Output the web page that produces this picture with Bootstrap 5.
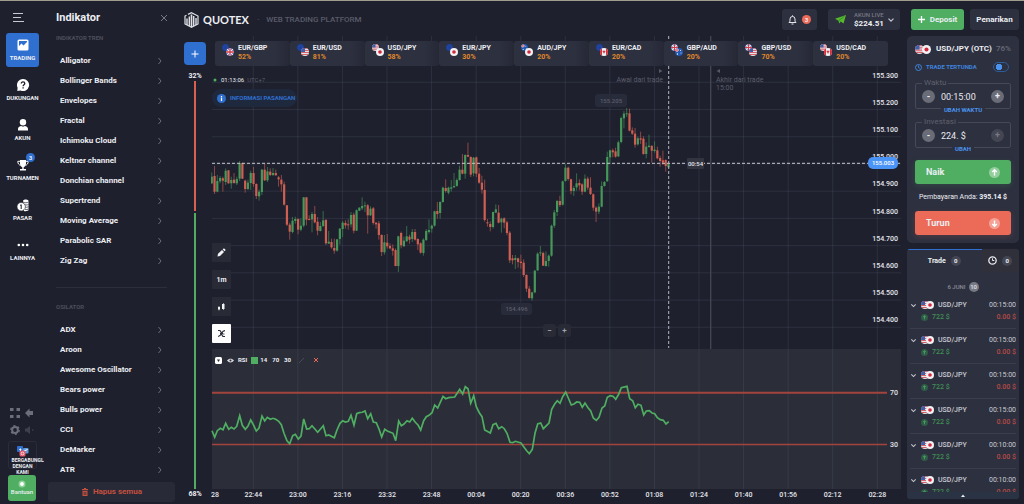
<!DOCTYPE html>
<html lang="id">
<head>
<meta charset="utf-8">
<meta name="viewport" content="width=device-width, initial-scale=1">
<title>Quotex – Web Trading Platform</title>
<link rel="stylesheet" href="https://cdn.jsdelivr.net/npm/bootstrap@5.3.0/dist/css/bootstrap.min.css">
<style>
:root{--bg:#1e202d;--panel:#2d303f;--blue:#2f6fd0;--sky:#4a94f0;--green:#4fae62;--red:#ec6b58}
body{background:var(--bg);color:#eceef3;font-family:Roboto,"Liberation Sans",sans-serif;font-size:7px;line-height:10px;overflow:hidden}
svg{display:block;flex:none}
a{text-decoration:none;color:inherit}
.app{height:100vh;border-top:1px solid #a09c8e}
.btn{--bs-btn-font-size:8px;--bs-btn-line-height:10px;--bs-btn-padding-x:0;--bs-btn-padding-y:0;--bs-btn-border-width:0px;--bs-btn-color:#eceef3;--bs-btn-border-radius:3px;--bs-btn-hover-color:#fff;font-weight:700;transition:none}
/* side navigation */
.side{width:44px;padding:9px 0 3px 6px;overflow:hidden}
.side-link{width:33px;height:34px;border-radius:3px;font-size:6px;line-height:8px;font-weight:700;position:relative;padding-top:5px}
.side-link.active{background:var(--blue)}
.side-link svg{width:14px;height:14px;margin-bottom:2px}
.menu-btn{height:15px;width:33px;padding-left:7px}
.count-dot{position:absolute;left:20px;top:0;width:9px;height:9px;border-radius:50%;background:var(--blue);line-height:9px;text-align:center}
.tiny-btn{width:12px;height:12px;color:#6c6e7b}
.tiny-set{gap:5px 2px;padding-left:3px;margin-bottom:5px;width:33px}
.join{width:29px;height:28px;border:1px solid #2a2c3a;border-radius:3px;font-size:5px;line-height:6px;font-weight:700;margin:0 0 6px 2px;padding-top:4px}
.join span{width:22px}
.help{background:var(--green);width:28px;height:26px;font-size:6px;line-height:8px;font-weight:500;margin-left:2px}
/* indicator list */
.indi{width:131px}
.indi-head{padding:10px 7px 9px 12px}
.indi h1{font-size:11px;line-height:14px;font-weight:700}
.indi h2{font-size:6px;line-height:8px;font-weight:700;color:#4c4e5c;margin:0 12px 9px}
.indi li a{height:20px;padding:0 12px 0 16px;font-size:8px;font-weight:700}
.indi hr{margin:16px 8px 15px 12px;border-color:#2c2e3b;opacity:1}
.clear-all{background:#282a37;height:20px;margin:0 0 2px 4px;width:127px;color:#c4503f}
/* header */
.top{height:35px;padding:8px 5px 0 9px}
.brand{font-family:Lato,sans-serif;font-size:11px;line-height:14px;font-weight:700}
.brand-link{padding-top:3px}
.tagline{font-size:8px;font-weight:500;color:#5a5c6a;padding:6px 0 0 8px;gap:7px}
.top .btn{height:21px;background:var(--panel)}
.top .btn.pay{background:var(--green);width:53px;gap:5px}
.top .bell{width:35px;padding:0 6px;gap:5px}
.top .acct{width:72px;margin:0 11px;padding:0 5px 0 7px;line-height:9px}
.acct small{display:block;font-size:6px;line-height:8px;color:#777985;font-weight:500}
.top .draw-out{width:49px;margin-left:6px}
.num{width:9px;height:9px;border-radius:50%;background:var(--red);font-size:6px;line-height:9px;text-align:center}
/* pair strip */
.gauge{width:24px;font-weight:700;margin:6px 4px 5px 8px}
.add-pair{width:22px;height:23px;background:var(--blue)}
.add-pair.btn{--bs-btn-border-radius:4px}
.gauge .top-share{margin:6px 0 0}
.meter{width:2px;gap:2px}
.chips{margin:5px 15px 0 4px}
.chip.btn{--bs-btn-font-size:7px;flex:1 1 0;height:25px;border-radius:3px;background:linear-gradient(90deg,#2d303f 80%,#262836);padding:3px 0 0 7px;line-height:9px;text-align:left}
.chip.btn:last-child{background:#2d303f}
.chip span span{color:#e08a2c}
.stage{position:relative;margin-right:4px}
#chart{position:absolute;inset:0;width:100%;height:100%;z-index:-1}
#chart text{font-family:Roboto,"Liberation Sans",sans-serif;font-size:7px;font-weight:500;fill:#e4e6ec}
.clock{padding-left:2px;margin-top:9px;font-size:6px}
.clock .zone{margin-left:3px;color:#5c5e6c}
.info.btn{--bs-btn-font-size:6px;--bs-btn-border-radius:9px;height:18px;background:#1f293e;color:#2f6fd0;width:85px;padding-left:5px;margin-left:1px;white-space:nowrap}
.btn.tool{--bs-btn-font-size:7px;width:19px;height:19px;background:#282a36;border-radius:1px}
.btn.tool.on{background:#fff}
.tools{margin:0 0 6px 1px;position:relative}
.zooms{position:absolute;left:331px;bottom:6px;gap:2px}
.zooms .btn{width:13px;height:13px;background:#282a36;color:#a0a2ac}
.legend{height:22px;margin:0 0 133px 4px;font-size:6px;font-weight:700}
.legend .eye{margin:0 4px 0 5px}
.legend .val{margin:0 5px}
.legend .edit{margin:0 8px 0 7px}
.sw{width:7px;height:7px;background:var(--green);margin:0 2px 0 4px}
/* right column */
.right{width:112px;margin-right:5px}
.order{background:var(--panel);border-radius:5px;padding:8px}
.pair-name{font-size:8px;font-weight:700}
.pair-name .pct{color:#6a6c79;font-weight:500}
.pending{height:10px;margin:8px 0 6px;font-size:6px;color:#3f83de}
.field{position:relative;margin-bottom:8px}
.field fieldset{border:1px solid #474956;border-radius:2px;height:31px;padding:2px 6px 0}
.field legend{float:none;width:auto;margin:0;padding:0 2px;font-size:8px;line-height:10px;color:#5f616e}
.field legend label{display:block}
.field input{background:none;border:0;padding:0;color:#e8eaf0;font-size:9px;line-height:12px;width:46px;margin-left:6px}
.step.btn{width:13px;height:13px;border-radius:50%;background:#6a6c78;font-size:9px;line-height:11px}
.step.btn.off{background:#444653;color:#777985}
.change{position:absolute;bottom:-5px;left:50%;transform:translateX(-50%);background:var(--panel);padding:0 3px;color:var(--sky);font-size:6px;line-height:8px;font-weight:700;white-space:nowrap}
.order .form-check-input[type=checkbox]{width:16px;height:10px;margin:0 2px 0 auto;border:1px solid #2d5c9c;border-radius:5px;background:radial-gradient(circle at 5px 4px,#4a94f0 0 3px,transparent 3px)}
.order .go{height:24px;padding:0 11px;font-size:9px;width:100%}
.go.up{background:var(--green);box-shadow:0 2px 6px #4fae6230}
.go.down{background:var(--red);box-shadow:0 2px 6px #ec6b5830}
.go svg{width:11px;height:11px}
.payout{margin:8px 0 9px}
.deals{background:var(--panel);border-radius:3px;margin:6px 0 5px;min-height:0}
.deals .tab{--bs-btn-font-size:7px;height:23px;border-radius:0;gap:5px}
.deals .tab.on{border-top:1px solid var(--blue);flex:2}
.deals .tab.off{background:#2f3039;flex:1}
.pill{width:10px;height:10px;border-radius:50%;background:#444654;font-size:6px;line-height:10px;text-align:center}
.date{height:22px;padding-top:7px;gap:3px;font-size:6px;font-weight:500;color:#8a8c98}
.date .pill{background:#777985;color:#e0e1e6}
.deal{height:35px;border-bottom:1px solid #3a3d4b;margin:0 3px;padding:6px 0 0;font-weight:500;color:#c9cbd3}
.deal .sum{padding:2px 0 0 11px;color:#3f8f56}
.deal .loss{color:#b54a46}
.more{height:7px;background:#2a3343}
</style>
<script src="https://cdn.jsdelivr.net/npm/bootstrap@5.3.0/dist/js/bootstrap.bundle.min.js"></script>
</head>
<body>
<svg width="0" height="0" class="position-absolute" aria-hidden="true">
 <defs>
  <clipPath id="disc"><circle cx="8" cy="8" r="8"/></clipPath>
  <symbol id="us" viewBox="0 0 16 16"><g clip-path="url(#disc)"><path fill="#e9e4e8" d="M0 0h16v16H0z"/><path stroke="#d4606a" stroke-width="2" d="M0 1h16M0 5h16M0 9h16M0 13h16"/><path fill="#3f5fa8" d="M0 0h8v8H0z"/></g></symbol>
  <symbol id="jp" viewBox="0 0 16 16"><circle cx="8" cy="8" r="8" fill="#f1f1f3"/><circle cx="8" cy="8" r="3.600" fill="#d3263c"/></symbol>
  <symbol id="eu" viewBox="0 0 16 16"><circle cx="8" cy="8" r="8" fill="#1c3f9c"/><circle cx="8" cy="8" r="4.500" fill="none" stroke="#4a62a0" stroke-width="1.400" stroke-dasharray="1.400 2"/></symbol>
  <symbol id="gb" viewBox="0 0 16 16"><g clip-path="url(#disc)"><path fill="#2b4a9c" d="M0 0h16v16H0z"/><path stroke="#eee" stroke-width="2.400" d="m0 0 16 16M16 0 0 16"/><path stroke="#eee" stroke-width="5" d="M8 0v16M0 8h16"/><path stroke="#d33a4c" stroke-width="2.600" d="M8 0v16M0 8h16"/></g></symbol>
  <symbol id="au" viewBox="0 0 16 16"><g clip-path="url(#disc)"><path fill="#2258b0" d="M0 0h16v16H0z"/><path stroke="#eee" stroke-width="3" d="M4 0v8M0 4h8"/><path stroke="#d33a4c" stroke-width="1.400" d="M4 0v8M0 4h8"/><circle cx="11" cy="5" r="1" fill="#fff"/><circle cx="12" cy="10" r="1" fill="#fff"/><circle cx="5" cy="12" r="1.400" fill="#fff"/></g></symbol>
  <symbol id="ca" viewBox="0 0 16 16"><g clip-path="url(#disc)"><path fill="#f1f1f3" d="M0 0h16v16H0z"/><path fill="#d8303c" d="M0 0h4v16H0zM12 0h4v16h-4zM8 4l1 2 2-.5-.6 2.500L8.400 10v2h-.8v-2L5.600 8 5 5.500 7 6z"/></g></symbol>
  <symbol id="chev" viewBox="0 0 6 8"><path fill="none" stroke="#6a6c79" d="m1.500 1 2.500 3-2.500 3"/></symbol>
  <symbol id="vee" viewBox="0 0 8 8"><path fill="none" stroke="#c4c6ce" stroke-width="1.200" d="m1.500 2.700 2.500 2.500 2.500-2.500"/></symbol>
  <symbol id="rise" viewBox="0 0 12 12"><circle cx="6" cy="6" r="6" fill="#2f5a48"/><path fill="none" stroke="#4fae62" stroke-width="1.300" d="M6 9V3M3.500 5.500 6 3l2.500 2.500"/></symbol>
 </defs>
</svg>

<div class="app d-flex">
 <nav class="side d-flex flex-column flex-shrink-0">
  <button class="btn menu-btn mb-2 flex-shrink-0" aria-label="Menu"><svg width="11" height="13" viewBox="0 0 11 13" stroke="#c8cad1"><path d="M0 2.500h10M0 6.500h8M0 10.500h11"/></svg></button>
  <div class="d-flex flex-column flex-shrink-0" style="gap:6px">
   <a href="#" class="side-link active d-flex flex-column align-items-center"><svg viewBox="0 0 14 14"><path fill="#fff" fill-rule="evenodd" d="M3 1.500h8A1.500 1.500 0 0 1 12.500 3v8a1.500 1.500 0 0 1-1.500 1.500H3A1.500 1.500 0 0 1 1.500 11V3A1.500 1.500 0 0 1 3 1.500zM3 3v5l2.500-2.500 2 2L11 4V3z"/></svg><span>TRADING</span></a>
   <a href="#" class="side-link d-flex flex-column align-items-center"><svg viewBox="0 0 14 14"><path fill="#fff" d="M7 1a6 6 0 1 1-2.500 11.400L1.300 13l.3-3.300A6 6 0 0 1 7 1z"/><path fill="none" stroke="#1e202d" stroke-width="1.300" d="M5.300 5.500c0-2.300 3.500-2.200 3.500 0 0 1.300-1.700 1.300-1.700 2.700M7.100 9.200v1.300"/></svg><span>DUKUNGAN</span></a>
   <a href="#" class="side-link d-flex flex-column align-items-center"><svg viewBox="0 0 14 14" fill="#fff"><circle cx="7" cy="4.200" r="3.200"/><path d="M2 12.500V11c0-1.700 1.500-2.800 3.300-3 1 .7 2.400.7 3.400 0 1.800.2 3.300 1.300 3.300 3v1.500z"/></svg><span>AKUN</span></a>
   <a href="#" class="side-link d-flex flex-column align-items-center"><svg viewBox="0 0 14 14"><path fill="#fff" d="M4 2h6v3.500C10 7.500 8.700 9 7.700 9.200V11H10v1.500H4V11h2.300V9.200C5.300 9 4 7.500 4 5.500z"/><path fill="none" stroke="#fff" d="M4 3.300H1.800c0 2.200 1 3.600 2.700 4M10 3.300h2.200c0 2.200-1 3.600-2.700 4"/></svg><span>TURNAMEN</span><span class="count-dot">3</span></a>
   <a href="#" class="side-link d-flex flex-column align-items-center"><svg viewBox="0 0 14 14"><path fill="#fff" d="M7 3c0-2 5.500-2 5.500 0v9c0 1-3 1.500-4.500 1z"/><path stroke="#1e202d" stroke-width=".7" fill="none" d="M7 4c1 1 4.500 1 5.500 0M8 6.500c1 .6 3.500.6 4.500 0M9 9c1 .4 2.500.3 3.500-.2M9 11.300c1 .4 2.500.3 3.500-.2"/><circle cx="5.200" cy="8.700" r="4.200" fill="#fff" stroke="#1e202d" stroke-width=".6"/><path stroke="#1e202d" d="M5.200 6.500v4.500M4.200 7.300h1"/></svg><span>PASAR</span></a>
   <a href="#" class="side-link d-flex flex-column align-items-center"><svg viewBox="0 0 14 14" fill="#fff"><circle cx="2.800" cy="7" r="1.300"/><circle cx="7" cy="7" r="1.300"/><circle cx="11.200" cy="7" r="1.300"/></svg><span>LAINNYA</span></a>
  </div>
  <div class="mt-auto d-flex flex-column flex-shrink-0">
   <div class="tiny-set d-flex flex-wrap">
    <button class="btn tiny-btn" aria-label="Layar penuh"><svg class="m-auto" width="10" height="10" viewBox="0 0 10 10" fill="#6c6e7b"><path d="M0 0h3.500v3H0zM6.500 0H10v3H6.500zM0 7h3.500v3H0zM6.500 7H10v3H6.500z"/></svg></button>
    <button class="btn tiny-btn" aria-label="Kembali"><svg class="m-auto" width="10" height="10" viewBox="0 0 10 10"><path fill="#6c6e7b" d="m1 5 4.500-4.500V3H9v4H5.500v2.500z"/></svg></button>
    <button class="btn tiny-btn" aria-label="Pengaturan"><svg class="m-auto" width="10" height="10" viewBox="0 0 10 10"><circle cx="5" cy="5" r="2.900" fill="none" stroke="#6c6e7b" stroke-width="2"/><circle cx="5" cy="5" r="4.300" fill="none" stroke="#6c6e7b" stroke-width="1.200" stroke-dasharray="2.200 2.300"/></svg></button>
    <button class="btn tiny-btn" aria-label="Suara"><svg class="m-auto" width="10" height="10" viewBox="0 0 10 10"><path fill="#3e404e" d="M1 3.500h1.800L6 1v8L2.800 6.500H1zM8 4.300h1.300v1.400H8z"/></svg></button>
   </div>
   <a href="#" class="join d-flex flex-column align-items-center text-center"><svg width="12" height="11" viewBox="0 0 12 11"><rect width="6" height="6" rx="1" fill="#2f6fd0"/><path stroke="#fff" d="M3.500 6V2.500M2.300 3.500h2"/><rect x="6" y="2" width="5.500" height="5.500" rx="1" fill="#5b9bdc"/><path stroke="#fff" d="m7 5 3.500-1.500"/><rect x="2.500" y="4.500" width="6" height="6" rx="1.500" fill="#e2586a"/><circle cx="5.500" cy="7.500" r="1.400" fill="none" stroke="#fff" stroke-width=".7"/></svg><span>BERGABUNGLAH DENGAN KAMI</span></a>
   <button class="btn help d-flex flex-column align-items-center justify-content-center"><svg width="8" height="8" viewBox="0 0 8 8"><circle cx="4" cy="4" r="3.500" fill="#8fd09a"/><circle cx="4" cy="4" r="1.900" fill="#fff"/></svg><span>Bantuan</span></button>
  </div>
 </nav>

 <aside class="indi d-flex flex-column flex-shrink-0">
  <div class="indi-head d-flex justify-content-between align-items-center flex-shrink-0"><h1 class="m-0">Indikator</h1><button class="btn" aria-label="Tutup"><svg width="8" height="8" viewBox="0 0 8 8" stroke="#777985"><path d="m1 1 6 6M7 1 1 7"/></svg></button></div>
  <div class="flex-grow-1 overflow-hidden" style="min-height:0">
   <h2>INDIKATOR TREN</h2>
   <ul class="list-unstyled m-0">
    <li><a href="#" class="d-flex align-items-center justify-content-between">Alligator<svg width="6" height="8"><use href="#chev"/></svg></a></li>
    <li><a href="#" class="d-flex align-items-center justify-content-between">Bollinger Bands<svg width="6" height="8"><use href="#chev"/></svg></a></li>
    <li><a href="#" class="d-flex align-items-center justify-content-between">Envelopes<svg width="6" height="8"><use href="#chev"/></svg></a></li>
    <li><a href="#" class="d-flex align-items-center justify-content-between">Fractal<svg width="6" height="8"><use href="#chev"/></svg></a></li>
    <li><a href="#" class="d-flex align-items-center justify-content-between">Ichimoku Cloud<svg width="6" height="8"><use href="#chev"/></svg></a></li>
    <li><a href="#" class="d-flex align-items-center justify-content-between">Keltner channel<svg width="6" height="8"><use href="#chev"/></svg></a></li>
    <li><a href="#" class="d-flex align-items-center justify-content-between">Donchian channel<svg width="6" height="8"><use href="#chev"/></svg></a></li>
    <li><a href="#" class="d-flex align-items-center justify-content-between">Supertrend<svg width="6" height="8"><use href="#chev"/></svg></a></li>
    <li><a href="#" class="d-flex align-items-center justify-content-between">Moving Average<svg width="6" height="8"><use href="#chev"/></svg></a></li>
    <li><a href="#" class="d-flex align-items-center justify-content-between">Parabolic SAR<svg width="6" height="8"><use href="#chev"/></svg></a></li>
    <li><a href="#" class="d-flex align-items-center justify-content-between">Zig Zag<svg width="6" height="8"><use href="#chev"/></svg></a></li>
   </ul>
   <hr>
   <h2>OSILATOR</h2>
   <ul class="list-unstyled m-0">
    <li><a href="#" class="d-flex align-items-center justify-content-between">ADX<svg width="6" height="8"><use href="#chev"/></svg></a></li>
    <li><a href="#" class="d-flex align-items-center justify-content-between">Aroon<svg width="6" height="8"><use href="#chev"/></svg></a></li>
    <li><a href="#" class="d-flex align-items-center justify-content-between">Awesome Oscillator<svg width="6" height="8"><use href="#chev"/></svg></a></li>
    <li><a href="#" class="d-flex align-items-center justify-content-between">Bears power<svg width="6" height="8"><use href="#chev"/></svg></a></li>
    <li><a href="#" class="d-flex align-items-center justify-content-between">Bulls power<svg width="6" height="8"><use href="#chev"/></svg></a></li>
    <li><a href="#" class="d-flex align-items-center justify-content-between">CCI<svg width="6" height="8"><use href="#chev"/></svg></a></li>
    <li><a href="#" class="d-flex align-items-center justify-content-between">DeMarker<svg width="6" height="8"><use href="#chev"/></svg></a></li>
    <li><a href="#" class="d-flex align-items-center justify-content-between">ATR<svg width="6" height="8"><use href="#chev"/></svg></a></li>
   </ul>
  </div>
  <button class="btn clear-all d-flex align-items-center justify-content-center gap-1 flex-shrink-0"><svg width="8" height="8" viewBox="0 0 8 8" fill="#c4503f"><path d="M1 1h6v1.300H1zM3 0h2v1H3zM1.500 3h5v5h-5z"/><path stroke="#282a37" stroke-width=".7" d="M3.200 4v3M4.800 4v3"/></svg>Hapus semua</button>
 </aside>

 <div class="flex-grow-1 d-flex flex-column" style="min-width:0">
  <header class="top d-flex align-items-start flex-shrink-0">
   <a href="#" class="brand-link d-flex align-items-center gap-1"><svg width="15" height="16" viewBox="0 0 15 16"><path fill="none" stroke="#dfe1e6" stroke-width="1.200" d="M4 2.400 7.500.7 14 4v8l-6.500 3.300L1 12V4l1.500-.8"/><path stroke="#dfe1e6" stroke-width="1.400" d="M3 13V6.500M5.300 14V4.500M9.700 14V4M12 13V6"/><path stroke="#dfe1e6" stroke-width="1.700" d="M7.500 15V2.500"/></svg><span class="brand">QUOTEX</span></a>
   <span class="tagline d-flex"><span>·</span><span>WEB TRADING PLATFORM</span></span>
   <div class="ms-auto d-flex">
    <button class="btn bell d-flex align-items-center" aria-label="Notifikasi"><svg width="9" height="10" viewBox="0 0 9 10" fill="none" stroke="#e4e6ec"><path d="M1 7.500h7l-1-1.300V4a2.500 2.500 0 0 0-5 0v2.200zM3.500 9h2M4.500.3v1"/></svg><span class="num">3</span></button>
    <button class="btn acct d-flex align-items-center"><svg width="11" height="9" viewBox="0 0 11 9"><path fill="#55b92e" d="M0 3.700 11 0 8.500 8.500 5.700 6.500 4.200 8.500 3.500 5.700z"/><path stroke="#1f5a1c" stroke-width=".5" d="M3.700 5.600 9.500 1.300"/></svg><span class="text-start ms-2"><small>AKUN LIVE</small>$224.51</span><svg class="ms-auto" width="8" height="8"><use href="#vee"/></svg></button>
    <button class="btn pay d-flex align-items-center justify-content-center"><svg width="7" height="7" viewBox="0 0 7 7" stroke="#fff" stroke-width="1.300"><path d="M3.500 0v7M0 3.500h7"/></svg>Deposit</button>
    <button class="btn draw-out">Penarikan</button>
   </div>
  </header>

  <div class="flex-grow-1 d-flex" style="min-height:0">
   <div class="gauge d-flex flex-column align-items-center flex-shrink-0">
    <button class="btn add-pair" aria-label="Tambah pasangan"><svg class="m-auto" width="8" height="8" viewBox="0 0 8 8" stroke="#fff"><path d="M4 .5v7M.5 4h7"/></svg></button>
    <span class="top-share">32%</span>
    <div class="meter flex-grow-1 d-flex flex-column"><div style="flex:32;background:#d9604f"></div><div style="flex:68;background:#4fae62"></div></div>
    <span>68%</span>
   </div>

   <main class="stage flex-grow-1 d-flex flex-column z-0" style="min-width:0">
    <svg id="chart" role="img" aria-label="USD/JPY"></svg>
    <div class="chips d-flex">
     <button class="btn chip d-flex"><svg class="me-1" width="12" height="12"><use href="#eu" width="7" height="7"/><use href="#gb" x="4" y="4" width="8" height="8"/></svg><span class="d-flex flex-column">EUR/GBP<span>52%</span></span></button>
     <button class="btn chip d-flex"><svg class="me-1" width="12" height="12"><use href="#eu" width="7" height="7"/><use href="#us" x="4" y="4" width="8" height="8"/></svg><span class="d-flex flex-column">EUR/USD<span>81%</span></span></button>
     <button class="btn chip d-flex"><svg class="me-1" width="12" height="12"><use href="#us" width="7" height="7"/><use href="#jp" x="4" y="4" width="8" height="8"/></svg><span class="d-flex flex-column">USD/JPY<span>58%</span></span></button>
     <button class="btn chip d-flex"><svg class="me-1" width="12" height="12"><use href="#eu" width="7" height="7"/><use href="#jp" x="4" y="4" width="8" height="8"/></svg><span class="d-flex flex-column">EUR/JPY<span>30%</span></span></button>
     <button class="btn chip d-flex"><svg class="me-1" width="12" height="12"><use href="#au" width="7" height="7"/><use href="#jp" x="4" y="4" width="8" height="8"/></svg><span class="d-flex flex-column">AUD/JPY<span>20%</span></span></button>
     <button class="btn chip d-flex"><svg class="me-1" width="12" height="12"><use href="#eu" width="7" height="7"/><use href="#ca" x="4" y="4" width="8" height="8"/></svg><span class="d-flex flex-column">EUR/CAD<span>20%</span></span></button>
     <button class="btn chip d-flex"><svg class="me-1" width="12" height="12"><use href="#gb" width="7" height="7"/><use href="#au" x="4" y="4" width="8" height="8"/></svg><span class="d-flex flex-column">GBP/AUD<span>20%</span></span></button>
     <button class="btn chip d-flex"><svg class="me-1" width="12" height="12"><use href="#gb" width="7" height="7"/><use href="#us" x="4" y="4" width="8" height="8"/></svg><span class="d-flex flex-column">GBP/USD<span>70%</span></span></button>
     <button class="btn chip d-flex"><svg class="me-1" width="12" height="12"><use href="#us" width="7" height="7"/><use href="#ca" x="4" y="4" width="8" height="8"/></svg><span class="d-flex flex-column">USD/CAD<span>20%</span></span></button>
    </div>
    <div class="clock d-flex align-items-center"><svg width="4" height="4"><circle cx="2" cy="2" r="1.500" fill="#4fae62"/></svg><span class="ms-1">01:13:06</span><span class="zone">UTC+7</span></div>
    <button class="btn info mt-1 d-flex align-items-center gap-1"><svg width="9" height="9" viewBox="0 0 9 9"><circle cx="4.500" cy="4.500" r="4.500" fill="#2f6fd0"/><path stroke="#fff" stroke-width="1.200" d="M4.500 3.800V7M4.500 2v1.200"/></svg>INFORMASI PASANGAN</button>
    <div class="tools d-flex flex-column mt-auto gap-2">
     <button class="btn tool" aria-label="Gambar"><svg class="m-auto" width="9" height="9" viewBox="0 0 9 9" fill="#f2f3f6"><path d="M.5 8.500 1 5.700 5 2l2 2-4 4zM5.700 1.400l.6-.6c1-1 2.900.9 1.900 1.900l-.6.6z"/></svg></button>
     <button class="btn tool">1m</button>
     <button class="btn tool" aria-label="Lilin"><svg class="m-auto" width="9" height="9" viewBox="0 0 9 9" fill="#f2f3f6"><path d="M1 5h2v2.500H1zM1.700 4h.6v4.500h-.6zM5 2h2.500v5H5zM6 1h.6v7H6z"/></svg></button>
     <button class="btn tool on" aria-label="Indikator"><svg class="m-auto" width="9" height="9" viewBox="0 0 9 9" fill="none" stroke="#2b2d38" stroke-width="1.200"><path d="M1 1.500h1.500c1 0 1.500 1 2 3s1 3 2 3H8M1 7.500c1.500 0 2.500-1 3.500-3S6.500 1.700 8 1.700M3 4.500h3M6.800 5.500v-1"/></svg></button>
     <div class="zooms d-flex"><button class="btn">−</button><button class="btn">+</button></div>
    </div>
    <div class="legend d-flex align-items-center"><svg width="7" height="7" viewBox="0 0 7 7"><rect width="7" height="7" rx="1.500" fill="#fff"/><path fill="#2b2d38" d="M2 2.500h3L3.500 5z"/></svg><svg class="eye" width="7" height="7" viewBox="0 0 7 7"><path fill="#d8dae0" d="M0 3.500C2 1 5 1 7 3.500 5 6 2 6 0 3.500z"/><circle cx="3.500" cy="3.500" r="1" fill="#2b2d38"/></svg>RSI<span class="sw"></span>14<span class="val">70</span>30<svg class="edit" width="7" height="7" viewBox="0 0 7 7" stroke="#494b58"><path d="M1 6 6 1"/></svg><svg width="6" height="6" viewBox="0 0 6 6" stroke="#ec6b58"><path d="m1 1 4 4M5 1 1 5"/></svg></div>
   </main>

   <div class="right d-flex flex-column flex-shrink-0">
    <form class="order flex-shrink-0">
     <div class="pair-name d-flex align-items-center"><svg width="17" height="9" class="me-1"><use href="#us" width="9" height="9"/><use href="#jp" x="7" width="9" height="9"/></svg>USD/JPY (OTC)<span class="pct ms-auto">76%</span></div>
     <div class="pending d-flex align-items-center"><svg width="7" height="7" viewBox="0 0 7 7" fill="none" stroke="#3f83de"><circle cx="3.500" cy="3.500" r="3"/><path d="M3.500 1.500v2l1.300.8"/></svg><label for="pending" class="fw-bold ms-1">TRADE TERTUNDA</label><input class="form-check-input" type="checkbox" id="pending"></div>
     <div class="field"><fieldset><legend><label for="time">Waktu</label></legend><div class="d-flex align-items-center"><button type="button" class="btn step">-</button><input type="text" id="time" value="00:15:00"><button type="button" class="btn step ms-auto">+</button></div></fieldset><a href="#" class="change">UBAH WAKTU</a></div>
     <div class="field"><fieldset><legend><label for="sum">Investasi</label></legend><div class="d-flex align-items-center"><button type="button" class="btn step">-</button><input type="text" id="sum" value="224. $"><button type="button" class="btn step off ms-auto">+</button></div></fieldset><a href="#" class="change">UBAH</a></div>
     <div class="pt-1"><button type="button" class="btn go up d-flex align-items-center justify-content-between">Naik<svg viewBox="0 0 12 12" fill="none"><circle cx="6" cy="6" r="6" fill="#93cf9d"/><path stroke="#fff" stroke-width="1.500" d="M6 9.300V3M3.500 5.500 6 3l2.500 2.500"/></svg></button></div>
     <div class="payout text-center text-nowrap">Pembayaran Anda: <b>395.14 $</b></div>
     <button type="button" class="btn go down d-flex align-items-center justify-content-between">Turun<svg viewBox="0 0 12 12" fill="none"><circle cx="6" cy="6" r="6" fill="#f4a295"/><path stroke="#fff" stroke-width="1.500" d="M6 2.700V9M3.500 6.500 6 9l2.500-2.500"/></svg></button>
    </form>
    <section class="deals d-flex flex-column flex-grow-1 overflow-hidden">
     <div class="d-flex flex-shrink-0"><button class="btn tab on d-flex align-items-center justify-content-center">Trade<span class="pill">0</span></button><button class="btn tab off d-flex align-items-center justify-content-center" aria-label="Tertunda"><svg width="9" height="9" viewBox="0 0 9 9" fill="none" stroke="#e8eaf0" stroke-width="1.300"><circle cx="4.500" cy="4.500" r="3.700"/><path stroke-width="1" d="M4.500 2.300v2.200h1.800"/></svg><span class="pill">0</span></button></div>
     <div class="flex-grow-1 overflow-hidden" style="min-height:0">
      <div class="date d-flex align-items-center justify-content-center">6 JUNI<span class="pill">10</span></div>
      <div class="deal"><div class="d-flex align-items-center"><svg width="7" height="7" class="me-1"><use href="#vee"/></svg><svg width="13" height="8" class="me-1"><use href="#us" width="8" height="8"/><use href="#jp" x="5" width="8" height="8"/></svg>USD/JPY<span class="ms-auto fw-normal">00:15:00</span></div><div class="sum d-flex align-items-center"><svg width="7" height="7" class="me-1"><use href="#rise"/></svg>722 $<span class="loss ms-auto">0.00 $</span></div></div>
      <div class="deal"><div class="d-flex align-items-center"><svg width="7" height="7" class="me-1"><use href="#vee"/></svg><svg width="13" height="8" class="me-1"><use href="#us" width="8" height="8"/><use href="#jp" x="5" width="8" height="8"/></svg>USD/JPY<span class="ms-auto fw-normal">00:15:00</span></div><div class="sum d-flex align-items-center"><svg width="7" height="7" class="me-1"><use href="#rise"/></svg>722 $<span class="loss ms-auto">0.00 $</span></div></div>
      <div class="deal"><div class="d-flex align-items-center"><svg width="7" height="7" class="me-1"><use href="#vee"/></svg><svg width="13" height="8" class="me-1"><use href="#us" width="8" height="8"/><use href="#jp" x="5" width="8" height="8"/></svg>USD/JPY<span class="ms-auto fw-normal">00:15:00</span></div><div class="sum d-flex align-items-center"><svg width="7" height="7" class="me-1"><use href="#rise"/></svg>722 $<span class="loss ms-auto">0.00 $</span></div></div>
      <div class="deal"><div class="d-flex align-items-center"><svg width="7" height="7" class="me-1"><use href="#vee"/></svg><svg width="13" height="8" class="me-1"><use href="#us" width="8" height="8"/><use href="#jp" x="5" width="8" height="8"/></svg>USD/JPY<span class="ms-auto fw-normal">00:15:00</span></div><div class="sum d-flex align-items-center"><svg width="7" height="7" class="me-1"><use href="#rise"/></svg>722 $<span class="loss ms-auto">0.00 $</span></div></div>
      <div class="deal"><div class="d-flex align-items-center"><svg width="7" height="7" class="me-1"><use href="#vee"/></svg><svg width="13" height="8" class="me-1"><use href="#us" width="8" height="8"/><use href="#jp" x="5" width="8" height="8"/></svg>USD/JPY<span class="ms-auto fw-normal">00:10:00</span></div><div class="sum d-flex align-items-center"><svg width="7" height="7" class="me-1"><use href="#rise"/></svg>722 $<span class="loss ms-auto">0.00 $</span></div></div>
      <div class="deal"><div class="d-flex align-items-center"><svg width="7" height="7" class="me-1"><use href="#vee"/></svg><svg width="13" height="8" class="me-1"><use href="#us" width="8" height="8"/><use href="#jp" x="5" width="8" height="8"/></svg>USD/JPY<span class="ms-auto fw-normal">00:10:00</span></div><div class="sum d-flex align-items-center"><svg width="7" height="7" class="me-1"><use href="#rise"/></svg>722 $<span class="loss ms-auto">0.00 $</span></div></div>
     </div>
     <button class="btn more d-flex justify-content-center align-items-center flex-shrink-0" aria-label="Lainnya"><svg width="4" height="3"><path fill="#eceef3" d="M0 3 2 .5 4 3z"/></svg></button>
    </section>
   </div>
  </div>
 </div>
</div>

<script>
// Each candle: direction, high, body top, body bottom, low (three units per pixel).
const evening = `g232,245,265,267 r213,243,290,297 g240,258,290,292 g243,249,259,265 r245,250,257,290 g220,227,261,270 r225,226,265,266 g245,255,265,281 r234,254,264,266 g245,252,265,270 g198,204,251,258 r203,204,251,252 r254,257,282,293 g254,263,282,285 g227,234,264,285 r216,234,267,275 r265,267,303,312 g284,290,304,317 g222,224,291,300 r205,224,256,258 g216,229,256,261 r220,230,240,243 g219,234,240,243 r224,234,241,242 r243,247,253,275 r240,254,268,290 r260,268,329,332 r330,331,389,393 r383,389,410,434 g366,377,411,415 g365,372,378,386 r370,372,404,418 g370,392,404,409 g306,307,392,397 r306,307,374,391 r361,372,375,376 g351,357,373,412 r333,357,382,385 r366,380,407,421 g381,393,408,409 g348,376,393,396 r372,375,445,450 g408,440,446,447 r431,441,457,461 r431,459,467,476 g432,433,467,470 g399,401,432,449 g378,383,402,426 r376,384,391,401 r373,388,391,404 g351,360,388,397 r353,359,407,415 g343,346,407,408 g337,338,347,348 g307,333,340,345 g320,331,334,351 r327,331,361,416 g334,341,361,363 r336,340,384,389 r382,383,388,401 r378,385,420,434 r418,420,471,483 g420,442,472,479 r417,443,454,461 r445,453,460,463 r448,460,467,482 r460,465,513,514 g422,424,513,531 r410,414,451,460 g425,437,454,455 g393,424,439,440 r419,425,434,446 g402,411,432,441 r402,411,434,437 r430,432,448,465 r442,445,473,476 g430,434,474,482 g402,408,435,438 g373,405,411,416 g389,392,401,413 g347,349,392,395 r321,348,357,371 g319,321,354,371`;
const night = `g320,323,366,368 r298,324,333,338 g320,323,338,343 g300,322,326,335 g279,318,322,323 g295,300,318,320 g257,269,300,302 r222,269,281,283 g223,225,281,296 r188,225,230,231 r229,231,284,291 g231,233,280,289 r230,232,281,291 r264,281,308,311 r287,308,329,341 r299,330,420,425 r417,427,429,440 r424,432,441,454 g395,396,441,446 g373,388,398,399 r375,398,428,430 g413,416,427,458 r412,415,428,445 r422,427,459,466 r453,458,541,549 r525,535,541,553 g525,534,540,567 r533,535,546,563 r524,545,549,566 r538,548,585,591 r583,585,626,636 r618,626,654,656 g635,637,655,662 g570,572,637,640 g517,521,571,573 g498,517,520,528 r515,519,557,558 g514,543,558,560 g523,527,543,560 g434,437,527,530 g390,397,437,444 g360,363,396,408 r347,363,375,381 g302,304,374,377 g253,263,303,305 r260,263,297,302 r296,298,333,343 g318,324,333,348 g280,310,322,332 r298,309,316,331 r310,313,335,345 g283,296,335,337 r290,296,323,330 r292,323,342,345 r340,343,383,392 r379,383,395,426 g370,380,395,402 g304,318,380,382 g303,306,318,320 g215,231,304,305 g209,211,232,252 r206,211,217,232 r203,214,230,233 g182,187,229,231 g110,114,186,190 g93,101,115,145 g84,100,102,111 r86,100,152,154 r142,151,161,165 r144,161,194,203 g170,175,193,197 r155,175,179,192 r169,176,222,224 g187,200,222,235 g164,197,201,203 r195,198,212,248 g184,209,213,218 r200,211,235,238 r227,234,243,260 r212,241,248,255 r238,240,258,275 g250,250,262,264`;
const rsiA = `21,272 29,292 37,272 46,265 54,269 62,250 71,268 79,262 87,267 95,259 104,227 112,256 121,268 129,258 137,240 146,256 154,273 162,264 171,228 179,243 187,232 196,238 204,235 212,238 221,244 229,254 237,280 246,302 254,311 263,287 271,283 280,297 288,288 296,237 305,267 313,266 321,257 338,277 346,268 355,257 363,287 371,285 388,293 396,270 405,250 413,242 421,246 430,244 438,226 447,256 455,221 463,218 472,217 480,213 488,236 497,221 505,246 514,248 522,267 530,291 539,268 547,273 564,280 572,302 581,243 589,257 597,252 606,242 614,246 622,235 631,247 639,255 647,270 656,242 664,230 672,226 681,218 689,195 698,204 714,169 722,176 731,173`;
const rsiB = `14,171 29,148 38,162 46,140 54,146 62,190 71,167 79,200 88,218 96,230 104,270 121,279 129,254 138,250 146,266 155,260 163,266 171,280 180,307 188,308 196,304 213,309 221,320 230,332 238,341 247,328 255,280 263,252 272,249 280,266 297,249 305,208 314,192 322,182 330,190 338,170 347,156 355,174 364,195 372,192 380,186 389,187 397,202 405,189 414,203 422,213 430,234 439,241 447,232 456,204 464,198 472,172 481,167 489,169 497,178 506,163 514,143 531,139 539,176 548,182 556,203 564,193 573,196 581,225 589,213 598,212 606,219 614,221 622,233 631,239 640,241 648,252 656,245`;
const svg = document.getElementById('chart');
function draw() {
  const W = svg.clientWidth, R = W - 2, out = [];
  const line = (x1, y1, x2, y2, c, extra = '') => out.push(`<line x1="${x1}" y1="${y1}" x2="${x2}" y2="${y2}" stroke="${c}" ${extra}/>`);
  const text = (x, y, s, extra = '') => out.push(`<text x="${x}" y="${y}" ${extra}>${s}</text>`);
  out.push(`<rect x="1" y="313" width="${R - 1}" height="140" fill="#2b2d38"/>`);
  // time grid, one line every 16 minutes
  text(0, 461, '28');
  for (let k = 0, x = 42.3; x < R - 6; k++, x += 44.57) {
    line(x, 0, x, 453, '#828aaa', 'stroke-opacity=".15"');
    const m = (22 * 60 + 44 + 16 * k) % 1440;
    text(x, 461, String(m / 60 | 0).padStart(2, 0) + ':' + String(m % 60).padStart(2, 0), 'text-anchor="middle"');
  }
  // price grid
  for (let k = 0; k < 10; k++) {
    const y = 46.3 + 27.22 * k;
    line(1, y, R, y, '#828aaa', 'stroke-opacity=".15"');
    text(R - 3, y - 4.8, (155.3 - k / 10).toFixed(3), 'text-anchor="end"');
  }
  // RSI bounds and curve
  line(1, 356.7, R - 14, 356.7, '#a3443c', 'stroke-width="2"');
  line(1, 408.5, R - 14, 408.5, '#a3443c', 'stroke-width="1.3"');
  text(R - 3, 359, '70', 'text-anchor="end"');
  text(R - 3, 411, '30', 'text-anchor="end"');
  const pts = (s, ox) => s.split(' ').map(p => { const [x, y] = p.split(','); return (ox + x / 3).toFixed(1) + ',' + (304 + y / 3).toFixed(1); }).join(' ');
  out.push(`<polyline points="${pts(rsiA, -6)} ${pts(rsiB, 239)}" fill="none" stroke="#4fae62" stroke-width="1.7"/>`);
  // candles
  let i = 0;
  for (const [set, top] of [[evening, 59], [night, 44]])
    for (const c of set.split(' ')) {
      const [h, a, b, l] = c.slice(1).split(',').map(v => top + v / 3);
      const x = 0.75 + 2.785 * i++, f = c[0] === 'g' ? '#45985a' : '#cf5f52';
      out.push(`<path stroke="${f}" stroke-opacity=".7" stroke-width=".9" d="M${x} ${h}V${l}"/><rect x="${x - 1.1}" y="${a}" width="2.2" height="${Math.max(b - a, 1)}" fill="${f}"/>`);
    }
  // current price and trade bounds
  line(1, 127.3, R, 127.3, '#c9cbd2', 'stroke-dasharray="3 2"');
  line(457.7, 0, 457.7, 312, '#b4b6bf', 'stroke-dasharray="3 2"');
  line(499.7, 0, 499.7, 313, '#454854', 'stroke-width="1.3"');
  const dim = 'style="fill:#5c5e6c;font-weight:400"';
  text(452, 46, 'Awal dari trade', 'text-anchor="end" ' + dim);
  text(505, 46, 'Akhir dari trade', dim);
  text(505, 54, '15:00', dim);
  out.push('<path fill="#565866" d="M448 33l3.500 2-3.500 2zM509 33l-3.500 2 3.500 2z"/>');
  const tag = (x, y, w, h, r, bg, s, st) => { out.push(`<rect x="${x}" y="${y}" width="${w}" height="${h}" rx="${r}" fill="${bg}"/>`); text(x + w / 2, y + h / 2 + 2.2, s, `text-anchor="middle" style="${st}"`); };
  tag(384, 58, 32, 13, 3, '#282b3a', '155.205', 'fill:#5c5e6c;font-size:6px');
  tag(290, 267, 31, 12, 3, '#282b3a', '154.496', 'fill:#5c5e6c;font-size:6px');
  tag(476, 122, 17, 11, 1, '#32343f', '00:54', 'font-size:6px');
  tag(R - 33, 121, 30, 12, 5, '#4a94f7', '155.003', 'font-size:6px;fill:#fff');
  svg.innerHTML = out.join('');
}
draw();
addEventListener('resize', draw);
</script>
</body>
</html>
